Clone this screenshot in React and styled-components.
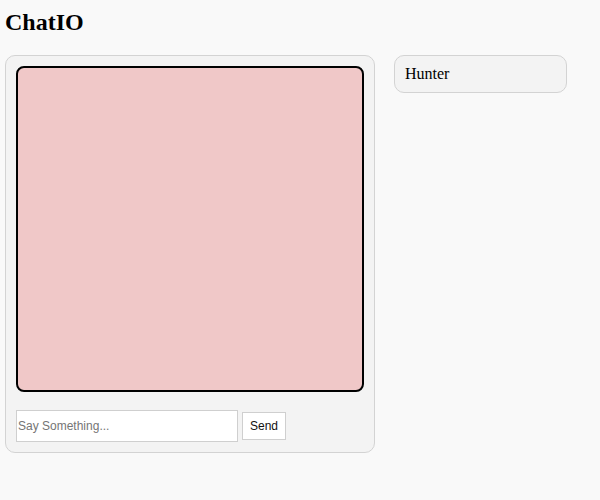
import React from 'react';
import styled, { createGlobalStyle } from 'styled-components';

const GlobalStyle = createGlobalStyle`
    html, body {
        margin: 0;
        padding: 0;
        background-color: #f9f9f9;
        font-family: "Liberation Serif", "Times New Roman", serif;
    }
`;

const Page = styled.div`
    padding: 0 5px;
`;

const Title = styled.h2`
    font-size: 24px;
    font-weight: bold;
    margin: 9px 0 19px 0;
    line-height: 27px;
    color: #000;
`;

const Layout = styled.div`
    display: flex;
    align-items: flex-start;
    gap: 19px;
`;

const ChatPanel = styled.div`
    width: 370px;
    height: 398px;
    box-sizing: border-box;
    padding: 10px;
    background-color: #f3f3f3;
    border: solid 1px #d3d3d3;
    border-radius: 10px;
    display: flex;
    flex-direction: column;
    gap: 18px;
`;

const Messages = styled.div`
    height: 326px;
    box-sizing: border-box;
    background-color: #f0c8c8;
    border: solid 2px #000;
    border-radius: 8px;
`;

const InputRow = styled.form`
    display: flex;
    align-items: center;
    gap: 4px;
    margin: 0;
`;

const MessageInput = styled.input`
    width: 222px;
    height: 32px;
    box-sizing: border-box;
    padding: 0 1px;
    border: solid 1px #cfcfcf;
    background-color: #fff;
    font-family: "Liberation Sans", Arial, sans-serif;
    font-size: 12px;
    color: #333;
    outline: none;
    &::placeholder {
        color: #757575;
    }
`;

const SendButton = styled.button`
    width: 44px;
    height: 28px;
    box-sizing: border-box;
    border: solid 1px #cfcfcf;
    background-color: #fff;
    font-family: "Liberation Sans", Arial, sans-serif;
    font-size: 12px;
    color: #111;
    padding: 0;
    cursor: pointer;
`;

const UserList = styled.div`
    width: 173px;
    display: flex;
    flex-direction: column;
    gap: 8px;
`;

const UserCard = styled.div`
    height: 38px;
    box-sizing: border-box;
    padding: 0 10px;
    display: flex;
    align-items: center;
    background-color: #f3f3f3;
    border: solid 1px #d3d3d3;
    border-radius: 10px;
    font-size: 16px;
    color: #000;
`;

export default function App() {
    const users = ['Hunter'];
    return (
        <Page>
            <GlobalStyle />
            <Title>ChatIO</Title>
            <Layout>
                <ChatPanel>
                    <Messages />
                    <InputRow onSubmit={(e) => e.preventDefault()}>
                        <MessageInput placeholder="Say Something..." />
                        <SendButton type="submit">Send</SendButton>
                    </InputRow>
                </ChatPanel>
                <UserList>
                    {users.map((name) => (
                        <UserCard key={name}>{name}</UserCard>
                    ))}
                </UserList>
            </Layout>
        </Page>
    );
}
